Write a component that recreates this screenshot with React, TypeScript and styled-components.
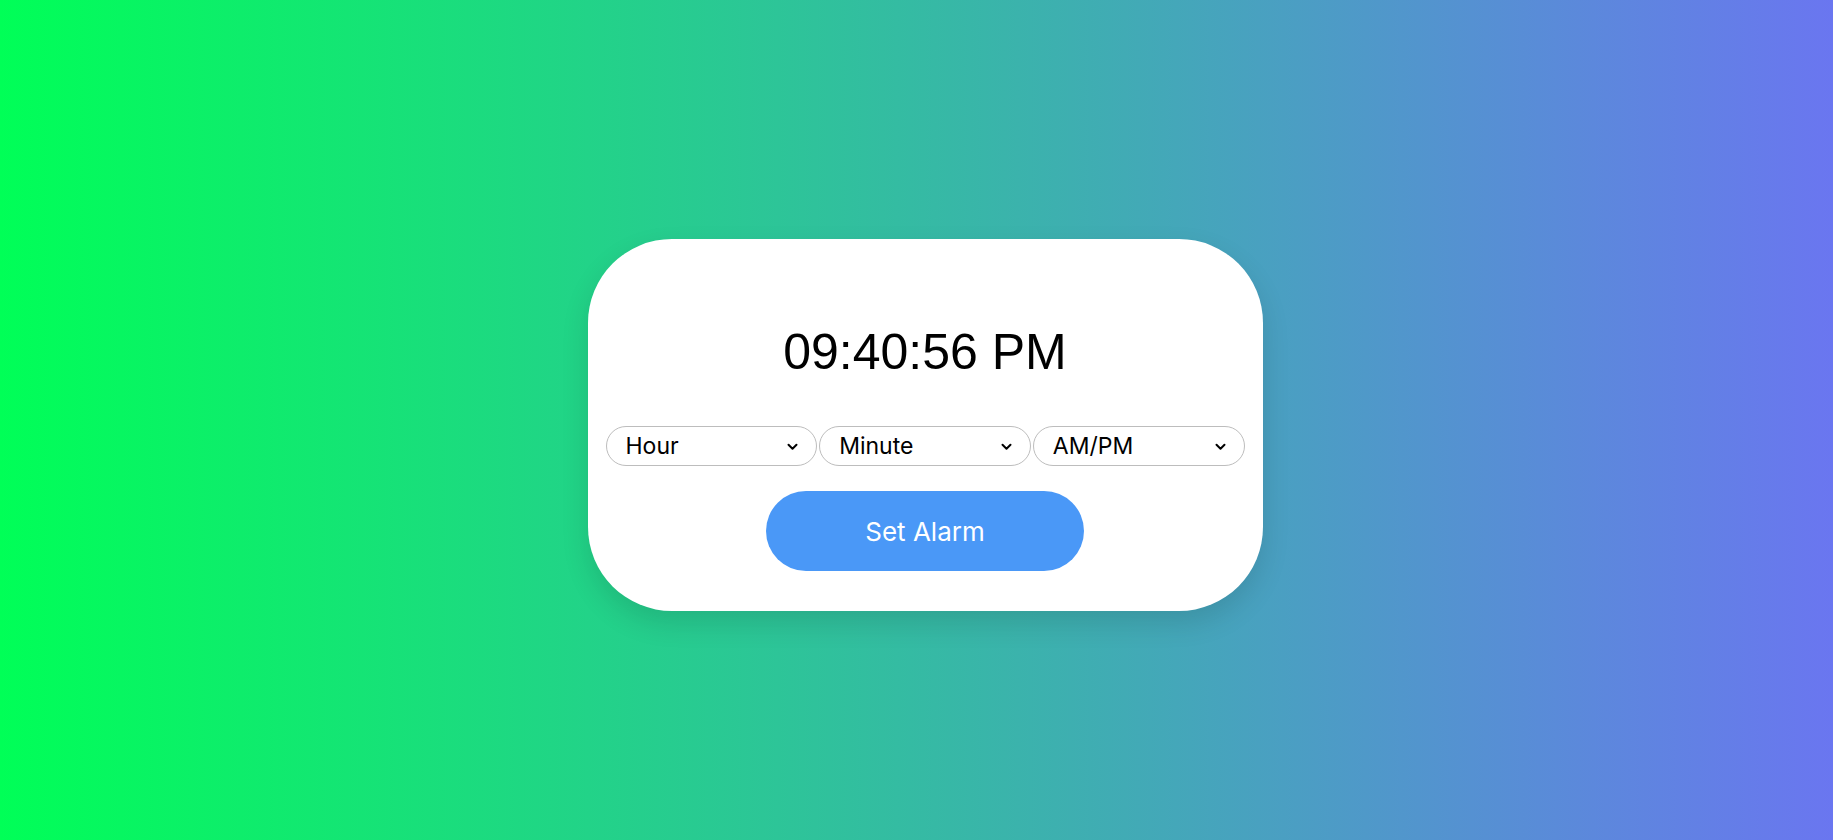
import React from "react";
import styled, { createGlobalStyle } from "styled-components";

const Global = createGlobalStyle`
  html, body { margin: 0; padding: 0; }
  body {
    font-family: Inter, "Open Sans", sans-serif;
  }
`;

const Page = styled.div`
  min-height: 100vh;
  box-sizing: border-box;
  display: flex;
  align-items: center;
  justify-content: center;
  padding: 10px 0 0 17px;
  background: linear-gradient(to right, #00ff57, #6a76f0);
`;

const Card = styled.div`
  width: 675px;
  box-sizing: border-box;
  background: #fff;
  border-radius: 84px;
  padding: 88px 18px 40px;
  display: flex;
  flex-direction: column;
  align-items: center;
  box-shadow: 0 12px 28px rgba(0, 0, 0, 0.12);
`;

const Clock = styled.h1`
  margin: 0;
  font-family: "Liberation Sans", Arial, sans-serif;
  font-weight: 400;
  font-size: 50px;
  line-height: 50px;
  color: #000;
`;

const Selects = styled.div`
  margin-top: 49px;
  width: 100%;
  display: flex;
  gap: 2px;
`;

const SelectBox = styled.div`
  flex: 1;
  position: relative;
  display: flex;
`;

const Select = styled.select`
  flex: 1;
  width: 100%;
  height: 40px;
  padding: 0 40px 0 19px;
  border: 1px solid #bdbdbd;
  border-radius: 20px;
  background: #fff;
  font-family: Inter, "Open Sans", sans-serif;
  font-size: 23px;
  color: #000;
  outline: none;
  appearance: none;
  -webkit-appearance: none;
`;

const Chevron = styled.svg`
  position: absolute;
  right: 19px;
  top: 50%;
  width: 11px;
  height: 8px;
  margin-top: -3px;
  pointer-events: none;
`;

const Button = styled.button`
  margin-top: 25px;
  width: 318px;
  height: 80px;
  border: none;
  border-radius: 40px;
  background: #4a98f7;
  color: #fff;
  font-family: Inter, "Open Sans", sans-serif;
  font-size: 26px;
  cursor: pointer;
`;

const Dropdown = ({ label }: { label: string }) => (
  <SelectBox>
    <Select defaultValue={label}>
      <option value={label} disabled hidden>
        {label}
      </option>
    </Select>
    <Chevron viewBox="0 0 11 8">
      <path d="M1.5 1.8 L5.5 5.8 L9.5 1.8" fill="none" stroke="#000" strokeWidth="2" strokeLinecap="round" strokeLinejoin="round" />
    </Chevron>
  </SelectBox>
);

export default function App() {
  return (
    <>
      <Global />
      <Page>
        <Card>
          <Clock>09:40:56 PM</Clock>
          <Selects>
            <Dropdown label="Hour" />
            <Dropdown label="Minute" />
            <Dropdown label="AM/PM" />
          </Selects>
          <Button>Set Alarm</Button>
        </Card>
      </Page>
    </>
  );
}
